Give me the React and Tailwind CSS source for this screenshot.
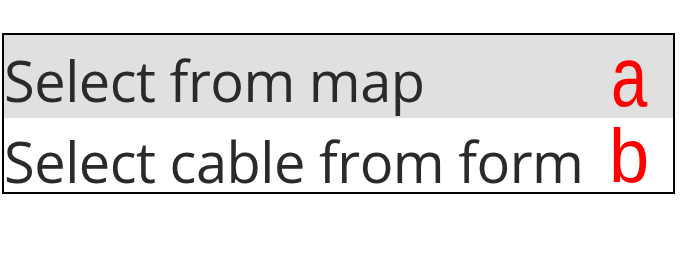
export default function App() {
  return (
    <div className="w-[698px] h-[254px] bg-white pt-[33px] pl-[2px]">
      <div className="w-[673px] border-2 border-black">
        <div className="flex items-start h-[83px] bg-[#e0e0e0]">
          <span className="flex-1 mt-[17px] text-[56px] leading-none tracking-[-0.5px] text-[#2a2a2a] font-['Open_Sans',sans-serif] whitespace-nowrap">
            Select from map
          </span>
          <div className="w-[62px] mt-[16px]">
            <span className="block origin-left scale-x-[0.76] text-[86px] leading-[50px] text-[#ff0000] font-['Liberation_Sans',Arial,sans-serif]">
              a
            </span>
          </div>
        </div>
        <div className="flex items-start h-[74px] bg-white">
          <span className="flex-1 mt-[15px] text-[56px] leading-none tracking-[-0.5px] text-[#2a2a2a] font-['Open_Sans',sans-serif] whitespace-nowrap">
            Select cable from form
          </span>
          <div className="w-[62px] mt-[8px]">
            <span className="block -ml-[2px] origin-left scale-x-[0.95] text-[76px] leading-[60px] text-[#ff0000] font-['Liberation_Sans',Arial,sans-serif]">
              b
            </span>
          </div>
        </div>
      </div>
    </div>
  );
}
